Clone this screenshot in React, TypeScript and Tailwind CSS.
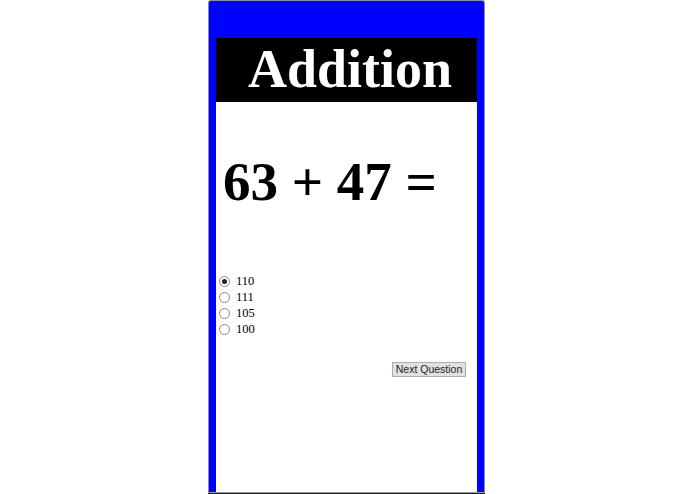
import React from "react";

const options = ["110", "111", "105", "100"];

const App: React.FC = () => {
  return (
    <div className="w-[695px] h-[494px] bg-white overflow-hidden">
      {/* Frame */}
      <div className="ml-[208px] w-[277px] h-[492px] flex flex-col bg-[#0000ff] border border-b-0 border-[#8c8c9c] rounded-t-[3px] px-[7px] pt-[37px] shadow-[0_1px_0_#999,0_2px_0_#222]">
        {/* Header */}
        <div className="h-[64px] bg-black pt-[4px] pl-[7px] text-center">
          <h1 className="text-white font-bold text-[54px] leading-none font-['Liberation_Serif',serif]">
            Addition
          </h1>
        </div>
        {/* Body */}
        <div className="flex-1 bg-white flex flex-col">
          <div className="mt-[52px] pl-[7px] text-black font-bold text-[55px] leading-none font-['Liberation_Serif',serif]">
            63 + 47 =
          </div>
          <div className="mt-[64px] pl-[3px] flex flex-col font-['Liberation_Serif',serif] text-[12.5px] text-black">
            {options.map((o, i) => (
              <label key={o} className="h-[16px] flex items-center gap-[6px]">
                <span className="w-[11px] h-[11px] rounded-full border border-[#8a8a8a] bg-white flex items-center justify-center">
                  {i === 0 && <span className="w-[5px] h-[5px] rounded-full bg-[#222]" />}
                </span>
                <span className="leading-none">{o}</span>
              </label>
            ))}
          </div>
          <div className="mt-[25px] pr-[11px] flex justify-end">
            <button className="w-[74px] h-[15px] bg-[#e1e1e1] border border-[#adadad] text-[10.5px] leading-none text-[#222] font-['Liberation_Sans',sans-serif]">
              Next Question
            </button>
          </div>
        </div>
      </div>
    </div>
  );
};

export default App;
